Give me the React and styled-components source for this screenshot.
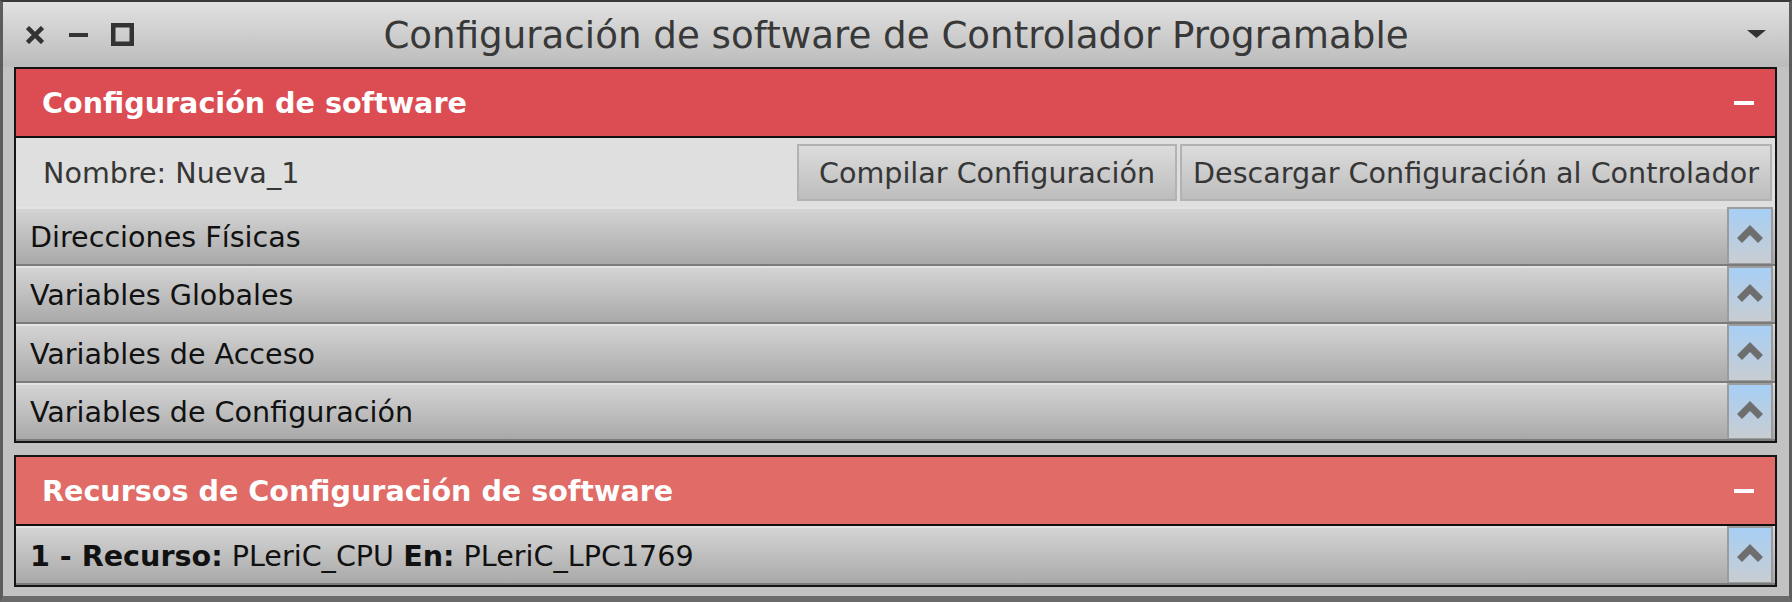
import React from "react";
import styled, { createGlobalStyle } from "styled-components";

const GlobalStyle = createGlobalStyle`
  html, body {
    margin: 0;
    padding: 0;
    background: #5a5a5a;
  }
  body {
    font-family: "DejaVu Sans", "Liberation Sans", sans-serif;
  }
  * {
    box-sizing: border-box;
  }
`;

const Window = styled.div`
  width: 1792px;
  height: 602px;
  display: flex;
  flex-direction: column;
  background: #c2c2c2;
  border: 3px solid #5c5c5c;
  border-top: 2px solid #3a3a3a;
  border-bottom-width: 6px;
  border-bottom-color: #6a6a6a;
`;

const TitleBar = styled.header`
  height: 65px;
  flex: none;
  display: grid;
  grid-template-columns: 1fr auto 1fr;
  align-items: center;
  padding: 0 23px;
  background: linear-gradient(#e1e1e1, #bbbbbb);
`;

const WindowControls = styled.div`
  display: flex;
  align-items: center;
  gap: 25px;
  svg + svg + svg {
    margin-left: -2px;
  }
`;

const Title = styled.h1`
  margin: 0;
  font-size: 37.2px;
  font-weight: normal;
  color: #383838;
  white-space: nowrap;
`;

const MenuArrow = styled.div`
  justify-self: end;
  display: flex;
  align-items: center;
  margin-top: -1px;
`;

const Body = styled.main`
  flex: 1;
  display: flex;
  flex-direction: column;
  gap: 12px;
  padding: 0 12px 10px 11px;
`;

const Panel = styled.section`
  border: 2px solid #151515;
  display: flex;
  flex-direction: column;
`;

const PanelHeader = styled.div`
  height: 69px;
  flex: none;
  display: flex;
  align-items: center;
  justify-content: space-between;
  padding: 0 21px 0 26px;
  background: ${(p) => p.$color};
  border-bottom: 2px solid #111;
`;

const PanelTitle = styled.span`
  color: #fff;
  font-weight: bold;
  font-size: 28.6px;
`;

const Collapse = styled.span`
  width: 20px;
  height: 4px;
  background: #fff;
`;

const NameRow = styled.div`
  height: 69px;
  flex: none;
  display: flex;
  align-items: center;
  padding: 0 3px 0 27px;
  background: #dfdfdf;
`;

const NameLabel = styled.span`
  font-size: 28.6px;
  color: #363636;
  margin-right: auto;
`;

const ButtonGroup = styled.div`
  display: flex;
  gap: 3px;
`;

const ActionButton = styled.button`
  height: 57px;
  width: ${(p) => p.$w}px;
  padding: 0;
  border: 2px solid #b2b2b2;
  background: linear-gradient(#dcdcdc, #bdbdbd);
  font-family: inherit;
  font-size: 28.6px;
  color: #363636;
  white-space: nowrap;
`;

const Row = styled.div`
  height: 58.5px;
  flex: none;
  display: flex;
  align-items: stretch;
  padding-right: 2px;
  border-bottom: 2px solid #7b7b7b;
  background: linear-gradient(
    #e3e3e3 0,
    #e3e3e3 2px,
    #d4d4d4 2px,
    #a9a9a9 100%
  );
`;

const RowLabel = styled.span`
  flex: 1;
  display: flex;
  align-items: center;
  padding: 3px 0 0 14px;
  font-size: 28.6px;
  color: #111;
  white-space: pre;
  b {
    font-weight: bold;
  }
`;

const ExpandButton = styled.div`
  width: 46px;
  display: flex;
  align-items: center;
  justify-content: center;
  padding-bottom: 3px;
  border: 2px solid #9c9c9c;
  border-bottom-width: 1px;
  background: linear-gradient(#a7cff5, #c8cdd2);
`;

function CloseIcon() {
  return (
    <svg width="18" height="18" viewBox="0 0 18 18">
      <path d="M1.5 1.5L16.5 16.5M16.5 1.5L1.5 16.5" stroke="#333" strokeWidth="4.5" />
    </svg>
  );
}

function MinimizeIcon() {
  return (
    <svg width="19" height="4" viewBox="0 0 19 4">
      <rect width="19" height="4" fill="#333" />
    </svg>
  );
}

function MaximizeIcon() {
  return (
    <svg width="23" height="23" viewBox="0 0 23 23">
      <rect x="2.25" y="2.25" width="18.5" height="18.5" fill="none" stroke="#333" strokeWidth="4.5" />
    </svg>
  );
}

function Chevron() {
  return (
    <svg width="26" height="18" viewBox="0 0 26 18">
      <polygon points="13,0 26,13 21,18 13,10 5,18 0,13" fill="#6e6e6e" />
    </svg>
  );
}

const sections = [
  "Direcciones Físicas",
  "Variables Globales",
  "Variables de Acceso",
  "Variables de Configuración",
];

export default function App() {
  return (
    <>
      <GlobalStyle />
      <Window>
        <TitleBar>
          <WindowControls>
            <CloseIcon />
            <MinimizeIcon />
            <MaximizeIcon />
          </WindowControls>
          <Title>Configuración de software de Controlador Programable</Title>
          <MenuArrow>
            <svg width="19" height="8" viewBox="0 0 19 8">
              <polygon points="0,0 19,0 9.5,8" fill="#333" />
            </svg>
          </MenuArrow>
        </TitleBar>
        <Body>
          <Panel>
            <PanelHeader $color="#db4c53">
              <PanelTitle>Configuración de software</PanelTitle>
              <Collapse />
            </PanelHeader>
            <NameRow>
              <NameLabel>Nombre: Nueva_1</NameLabel>
              <ButtonGroup>
                <ActionButton $w={380}>Compilar Configuración</ActionButton>
                <ActionButton $w={592}>Descargar Configuración al Controlador</ActionButton>
              </ButtonGroup>
            </NameRow>
            {sections.map((name) => (
              <Row key={name}>
                <RowLabel>{name}</RowLabel>
                <ExpandButton>
                  <Chevron />
                </ExpandButton>
              </Row>
            ))}
          </Panel>
          <Panel>
            <PanelHeader $color="#e06b67">
              <PanelTitle>Recursos de Configuración de software</PanelTitle>
              <Collapse />
            </PanelHeader>
            <Row>
              <RowLabel>
                <b>1 - Recurso:</b> PLeriC_CPU <b>En:</b> PLeriC_LPC1769
              </RowLabel>
              <ExpandButton>
                <Chevron />
              </ExpandButton>
            </Row>
          </Panel>
        </Body>
      </Window>
    </>
  );
}
